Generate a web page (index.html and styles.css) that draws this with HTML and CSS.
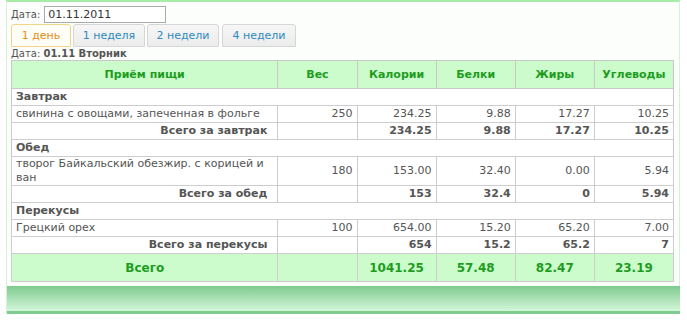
FILE: index.html
```html
<!DOCTYPE html>
<html>
<head>
<meta charset="utf-8">
<link rel="stylesheet" href="styles.css">
</head>
<body>
<div class="panel">
  <div class="inner">
    <div class="date-row">
      <span class="lbl">Дата:</span>
      <input class="date-input" type="text" value="01.11.2011">
    </div>
    <div class="tabs">
      <span class="tab active">1 день</span>
      <span class="tab">1 неделя</span>
      <span class="tab">2 недели</span>
      <span class="tab">4 недели</span>
    </div>
    <div class="day-title">Дата: <b>01.11 Вторник</b></div>
    <table class="diet">
      <colgroup>
        <col class="c-name"><col class="c-num"><col class="c-num"><col class="c-num"><col class="c-num"><col class="c-num">
      </colgroup>
      <thead>
        <tr><th>Приём пищи</th><th>Вес</th><th>Калории</th><th>Белки</th><th>Жиры</th><th>Углеводы</th></tr>
      </thead>
      <tbody>
        <tr class="group"><td colspan="6">Завтрак</td></tr>
        <tr class="item"><td>свинина с овощами, запеченная в фольге</td><td>250</td><td>234.25</td><td>9.88</td><td>17.27</td><td>10.25</td></tr>
        <tr class="sum"><td>Всего за завтрак</td><td></td><td>234.25</td><td>9.88</td><td>17.27</td><td>10.25</td></tr>
        <tr class="group"><td colspan="6">Обед</td></tr>
        <tr class="item"><td>творог Байкальский обезжир. с корицей и ван</td><td>180</td><td>153.00</td><td>32.40</td><td>0.00</td><td>5.94</td></tr>
        <tr class="sum"><td>Всего за обед</td><td></td><td>153</td><td>32.4</td><td>0</td><td>5.94</td></tr>
        <tr class="group"><td colspan="6">Перекусы</td></tr>
        <tr class="item"><td>Грецкий орех</td><td>100</td><td>654.00</td><td>15.20</td><td>65.20</td><td>7.00</td></tr>
        <tr class="sum"><td>Всего за перекусы</td><td></td><td>654</td><td>15.2</td><td>65.2</td><td>7</td></tr>
      </tbody>
      <tfoot>
        <tr><td>Всего</td><td></td><td>1041.25</td><td>57.48</td><td>82.47</td><td>23.19</td></tr>
      </tfoot>
    </table>
  </div>
  <div class="footer-bar"></div>
</div>
</body>
</html>
```
FILE: styles.css
```css
html, body {
  margin: 0;
  padding: 0;
  background: #ffffff;
}
body {
  font-family: "DejaVu Sans", Verdana, sans-serif;
  font-size: 11px;
  color: #555555;
}
.panel {
  margin-left: 6px;
  width: 672px;
  background: #fbfefa;
  border-top: 2px solid #a6eca6;
  border-left: 1px solid #d6f2d6;
  border-right: 1px solid #d6f2d6;
}
.inner {
  padding: 4px 5px 4px 4px;
}
.date-row {
  display: flex;
  align-items: center;
  gap: 4px;
  height: 17px;
}
.lbl {
  font-size: 10px;
  color: #555;
}
.date-input {
  box-sizing: border-box;
  width: 122px;
  height: 17px;
  margin: 0;
  padding: 0 3px;
  border: 1px solid #aaaaaa;
  background: #fff;
  font-family: "DejaVu Sans", Verdana, sans-serif;
  font-size: 11px;
  color: #333;
}
.tabs {
  display: flex;
  gap: 2px;
  margin-top: 1px;
}
.tab {
  box-sizing: border-box;
  height: 23px;
  display: flex;
  align-items: center;
  justify-content: center;
  border: 1px solid #d6d6d6;
  border-radius: 3px 3px 0 0;
  background: linear-gradient(#f6f6f6, #ececec);
  color: #2e8ac0;
  font-size: 11px;
  width: 72px;
}
.tab.active {
  width: 60px;
  border-color: #f2d488;
  background: #fffef6;
  color: #e88d10;
}
.tab:last-child {
  width: 74px;
  margin-left: 1px;
}
.day-title {
  font-size: 10px;
  line-height: 12px;
  margin-top: 1px;
  color: #555;
}
.day-title b {
  font-weight: bold;
}
.diet {
  border-collapse: collapse;
  width: 663px;
  table-layout: fixed;
  margin-top: 0;
  border: 1px solid #c8c8c8;
}
.c-name { width: 266px; }
.c-num { width: 79px; }
.diet th {
  height: 27px;
  background: #ccfccc;
  color: #1e9c1e;
  font-weight: bold;
  font-size: 11px;
  border: 1px solid #c8c8c8;
  padding: 0 4px;
  text-align: center;
}
.diet td {
  border: 1px solid #cdcdcd;
  padding: 0 4px;
  height: 16px;
  line-height: 14px;
  text-align: right;
  background: #fefffe;
}
.diet td:first-child {
  text-align: left;
}
.diet tr.group td {
  font-weight: bold;
  text-align: left;
  border-left: 1px solid #c8c8c8;
  border-right: 1px solid #c8c8c8;
}
.diet tr.item td:first-child {
  padding-right: 10px;
}
.diet tr.sum td {
  font-weight: bold;
}
.diet tr.sum td:first-child {
  text-align: right;
  padding-right: 10px;
}
.diet tfoot td {
  height: 27px;
  background: #ccfccc;
  color: #1e9c1e;
  font-weight: bold;
  font-size: 12px;
  text-align: center;
}
.diet tfoot td:first-child {
  text-align: center;
  font-size: 12px;
}
.footer-bar {
  height: 25px;
  margin-right: -1px;
  background: linear-gradient(#7fcb8f, #d3f6da);
  border-bottom: 3px solid #80cc90;
}
```
